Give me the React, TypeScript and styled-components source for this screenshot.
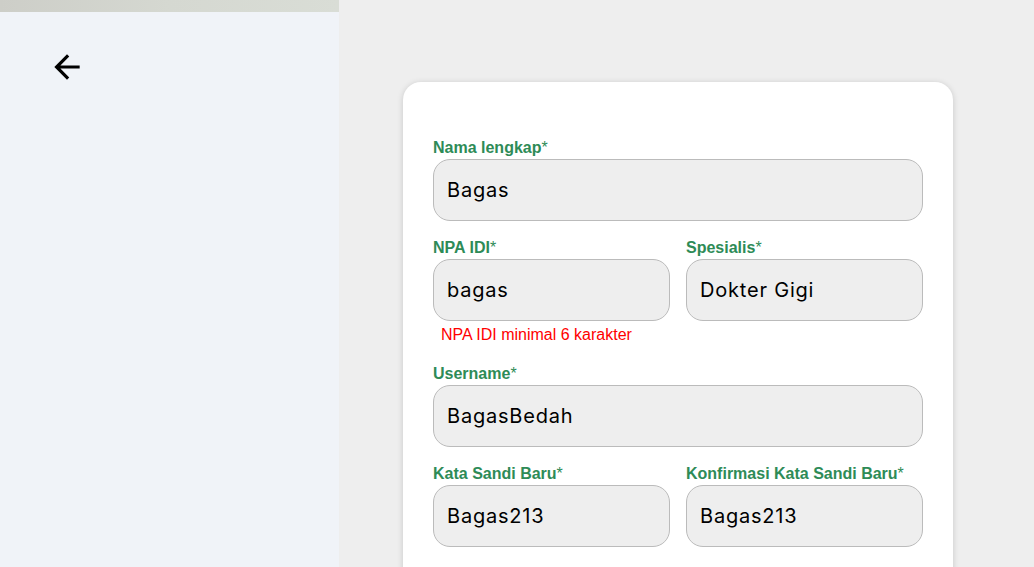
import { createGlobalStyle, styled } from "styled-components";

const GlobalStyle = createGlobalStyle`
  html, body {
    margin: 0;
    padding: 0;
  }
  body {
    font-family: "Liberation Sans", Arial, sans-serif;
    background: #eeeeee;
  }
  * {
    box-sizing: border-box;
  }
`;

const Page = styled.div`
  display: grid;
  grid-template-columns: 339px 1fr;
  min-height: 757px;
`;

const SidePanel = styled.aside`
  display: flex;
  flex-direction: column;
  background-color: #f0f3f8;
`;

const Banner = styled.div`
  height: 12px;
  background: linear-gradient(90deg, #cdcec8 0%, #d5d8d1 50%, #d9ddd6 100%);
`;

const BackButton = styled.button`
  display: flex;
  align-items: center;
  justify-content: center;
  width: 38px;
  height: 38px;
  margin: 36px 0 0 48px;
  padding: 0;
  border: none;
  background: transparent;
  cursor: pointer;
  color: #000;
`;

const Main = styled.main`
  padding: 82px 0 40px 64px;
`;

const Card = styled.section`
  width: 550px;
  min-height: 620px;
  padding: 56px 30px 40px;
  background-color: #ffffff;
  border-radius: 18px;
  box-shadow: 0 1px 6px rgba(0, 0, 0, 0.16);
  display: flex;
  flex-direction: column;
  gap: 17px;
`;

const Row = styled.div<{ $cols?: number }>`
  display: grid;
  grid-template-columns: repeat(${(p) => p.$cols ?? 1}, 1fr);
  column-gap: 16px;
`;

const Field = styled.div`
  display: flex;
  flex-direction: column;
`;

const Label = styled.label`
  font-family: "Liberation Sans", Arial, sans-serif;
  font-size: 16px;
  line-height: 18px;
  font-weight: 700;
  color: #2e8b57;
  padding-top: 1px;
  margin-bottom: 2px;

  span {
    font-weight: 400;
  }
`;

const Input = styled.input`
  width: 100%;
  height: 62px;
  padding: 0 13px;
  border: 1px solid #bbbbbb;
  border-radius: 17px;
  background-color: #eeeeee;
  font-family: "Inter", "Noto Sans", sans-serif;
  font-size: 20px;
  letter-spacing: 0.8px;
  color: #000;
  outline: none;
`;

const ErrorText = styled.div`
  font-family: "Liberation Sans", Arial, sans-serif;
  font-size: 16px;
  line-height: 20px;
  color: #ff0000;
  padding-left: 8px;
  margin: 4px 0 2px;
`;

const ArrowBack = () => (
  <svg width="38" height="38" viewBox="0 0 24 24" fill="currentColor">
    <path d="M20 11H7.83l5.59-5.59L12 4l-8 8 8 8 1.41-1.41L7.83 13H20v-2z" />
  </svg>
);

interface FormFieldProps {
  label: string;
  value: string;
  error?: string;
}

const FormField = ({ label, value, error }: FormFieldProps) => (
  <Field>
    <Label>
      {label}
      <span>*</span>
    </Label>
    <Input defaultValue={value} />
    {error && <ErrorText>{error}</ErrorText>}
  </Field>
);

const App = () => {
  return (
    <>
      <GlobalStyle />
      <Page>
        <SidePanel>
          <Banner />
          <BackButton aria-label="Kembali">
            <ArrowBack />
          </BackButton>
        </SidePanel>
        <Main>
          <Card>
            <Row>
              <FormField label="Nama lengkap" value="Bagas" />
            </Row>
            <Row $cols={2}>
              <FormField label="NPA IDI" value="bagas" error="NPA IDI minimal 6 karakter" />
              <FormField label="Spesialis" value="Dokter Gigi" />
            </Row>
            <Row>
              <FormField label="Username" value="BagasBedah" />
            </Row>
            <Row $cols={2}>
              <FormField label="Kata Sandi Baru" value="Bagas213" />
              <FormField label="Konfirmasi Kata Sandi Baru" value="Bagas213" />
            </Row>
          </Card>
        </Main>
      </Page>
    </>
  );
};

export default App;
